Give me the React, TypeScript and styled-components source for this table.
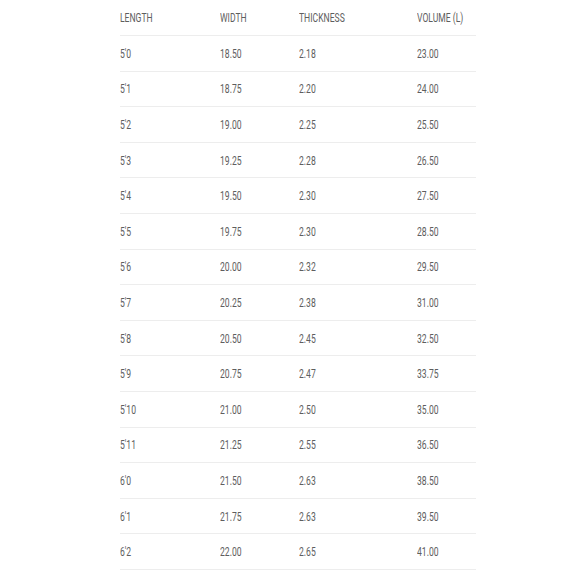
import styled, { createGlobalStyle } from 'styled-components'

const GlobalStyle = createGlobalStyle`
  html, body {
    margin: 0;
    padding: 0;
    background: #ffffff;
  }
`

const Page = styled.div`
  width: 584px;
  height: 584px;
  overflow: hidden;
  padding-left: 120px;
  box-sizing: border-box;
`

const Table = styled.div`
  width: 356px;
  font-family: Roboto, 'DejaVu Sans', sans-serif;
  font-weight: 400;
  color: #5e5e5e;
`

const Row = styled.div<{ header?: boolean }>`
  display: grid;
  grid-template-columns: 100px 79px 118px 59px;
  align-items: center;
  height: ${({ header }) => (header ? '35px' : '34.6px')};
  border-bottom: 1px solid #ededed;
  font-size: 13px;
  text-transform: ${({ header }) => (header ? 'uppercase' : 'none')};
`

const Cell = styled.div`
  white-space: nowrap;
  transform: scaleX(0.66);
  transform-origin: left center;
`

const rows = [
  ["5'0", '18.50', '2.18', '23.00'],
  ["5'1", '18.75', '2.20', '24.00'],
  ["5'2", '19.00', '2.25', '25.50'],
  ["5'3", '19.25', '2.28', '26.50'],
  ["5'4", '19.50', '2.30', '27.50'],
  ["5'5", '19.75', '2.30', '28.50'],
  ["5'6", '20.00', '2.32', '29.50'],
  ["5'7", '20.25', '2.38', '31.00'],
  ["5'8", '20.50', '2.45', '32.50'],
  ["5'9", '20.75', '2.47', '33.75'],
  ["5'10", '21.00', '2.50', '35.00'],
  ["5'11", '21.25', '2.55', '36.50'],
  ["6'0", '21.50', '2.63', '38.50'],
  ["6'1", '21.75', '2.63', '39.50'],
  ["6'2", '22.00', '2.65', '41.00'],
]

const App = () => (
  <>
    <GlobalStyle />
    <Page>
      <Table>
        <Row header>
          <Cell>Length</Cell>
          <Cell>Width</Cell>
          <Cell>Thickness</Cell>
          <Cell>Volume (L)</Cell>
        </Row>
        {rows.map((r) => (
          <Row key={r[0]}>
            {r.map((v, i) => (
              <Cell key={i}>{v}</Cell>
            ))}
          </Row>
        ))}
      </Table>
    </Page>
  </>
)

export default App
